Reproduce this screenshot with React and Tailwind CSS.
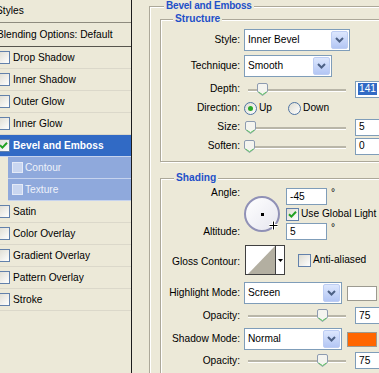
import React from "react";

// Effects list shown in the left column of the dialog
const effects = [
  { label: "Drop Shadow" },
  { label: "Inner Shadow" },
  { label: "Outer Glow" },
  { label: "Inner Glow" },
  { label: "Bevel and Emboss", checked: true, selected: true },
  { label: "Contour", sub: true },
  { label: "Texture", sub: true },
  { label: "Satin" },
  { label: "Color Overlay" },
  { label: "Gradient Overlay" },
  { label: "Pattern Overlay" },
  { label: "Stroke" },
];

// XP style check box
const CheckBox = ({ checked, className = "" }) => (
  <span
    className={`flex h-[13px] w-[13px] shrink-0 items-center justify-center border border-[#6281ab] bg-linear-to-br from-[#dedcd2] to-white ${className}`}
  >
    {checked && (
      <svg width="9" height="9" viewBox="0 0 9 9">
        <path d="M1 4.2 L3.4 6.6 L8 1.8" stroke="#21a121" strokeWidth="2" fill="none" />
      </svg>
    )}
  </span>
);

// XP style radio button
const Radio = ({ checked }) => (
  <span className="flex h-[13px] w-[13px] shrink-0 items-center justify-center rounded-full border border-[#4f74a3] bg-linear-to-br from-[#dedcd2] to-white">
    {checked && <span className="h-[5px] w-[5px] rounded-full bg-[#2aa82a]" />}
  </span>
);

// Right aligned label column
const Label = ({ children, className = "" }) => (
  <span className={`w-[79px] shrink-0 text-right ${className}`}>{children}</span>
);

// Combo box with the blue XP drop button
const Select = ({ children, className = "" }) => (
  <div className={`flex h-[22px] shrink-0 items-center border border-[#7f9db9] bg-white ${className}`}>
    <span className="flex-1 pl-[3px]">{children}</span>
    <span className="mr-[1px] flex h-[18px] w-[17px] items-center justify-center rounded-[2px] border border-[#bdcdf3] bg-linear-to-b from-[#dde7fd] to-[#b3c6f4]">
      <svg width="9" height="6" viewBox="0 0 9 6">
        <path d="M1 1 L4.5 4.5 L8 1" stroke="#4d6185" strokeWidth="2" fill="none" />
      </svg>
    </span>
  </div>
);

// Small text field
const Field = ({ children, selected, className = "", w = "w-[34px]" }) => (
  <div className={`flex h-[17px] shrink-0 items-center border border-[#7f9db9] bg-white pl-[2px] ${w} ${className}`}>
    <span className={selected ? "bg-[#316ac5] px-[1px] text-white" : "px-[1px]"}>{children}</span>
  </div>
);

// Track bar with its thumb, pos is the thumb offset in px
const Slider = ({ pos }) => (
  <div className="relative ml-[4px] h-[13px] w-[102px] shrink-0">
    <div className="absolute left-[4px] right-0 top-[6px] h-[2px] bg-[#b9b6a8] shadow-[0_1px_0_#fff]" />
    <svg className="absolute top-0" style={{ left: pos }} width="11" height="13" viewBox="0 0 11 13">
      <path
        d="M0.5 2 Q0.5 0.5 2 0.5 H9 Q10.5 0.5 10.5 2 V8.5 L5.5 12.5 L0.5 8.5 Z"
        fill="#f4f4ef"
        stroke="#8d9bb0"
      />
      <path d="M1.5 9 L5.5 11.6 L9.5 9" stroke="#5cc45c" fill="none" />
    </svg>
  </div>
);

const Degree = () => <span className="ml-[4px] self-start leading-[10px]">°</span>;

const groupBox =
  "border border-[#aca899] shadow-[inset_1px_1px_0_#fff,1px_1px_0_#fff]";

export default function App() {
  return (
    <div className="flex h-[373px] w-[379px] overflow-hidden bg-[#ece9d8] font-['Liberation_Sans',Arial,sans-serif] text-[10.2px] leading-[12px] text-black">
      {/* Styles list */}
      <div className="flex w-[132px] shrink-0 flex-col border-r border-[#1d1d1d]">
        <div className="flex h-[23px] items-center border-b border-[#8e8b7e]">
          <span className="ml-[-4px]">Styles</span>
        </div>
        <div className="flex h-[24px] items-center border-b border-[#57554d]">
          <span className="ml-[-3px]">Blending Options: Default</span>
        </div>
        {effects.map((fx) =>
          fx.sub ? (
            <div key={fx.label} className="flex h-[22px] pl-[8px]">
              <div className="flex flex-1 items-center border-b border-[#c6d3ee] bg-[#8fa9dc] text-[#eef2fa]">
                <span className="ml-[4px] h-[11px] w-[11px] border border-[#e4eaf7] bg-[#c9d6f0]" />
                <span className="ml-[2px]">{fx.label}</span>
              </div>
            </div>
          ) : (
            <div
              key={fx.label}
              className={`flex h-[22px] items-center border-b ${
                fx.selected
                  ? "border-[#c6d3ee] bg-[#316ac5] font-bold text-white"
                  : "border-[#dbd8ca]"
              }`}
            >
              <CheckBox checked={fx.checked} className="ml-[-3px]" />
              <span className="ml-[3px]">{fx.label}</span>
            </div>
          )
        )}
      </div>

      {/* Bevel and Emboss settings */}
      <div className="min-w-0 flex-1">
        <fieldset className={`ml-[17px] w-[260px] pb-[20px] ${groupBox}`}>
          <legend className="ml-[14px] bg-[#ece9d8] px-[2px] text-[10px] font-bold leading-[12px] tracking-[-0.2px] text-[#1e50c8]">
            Bevel and Emboss
          </legend>

          {/* Structure */}
          <fieldset className={`ml-[10px] mt-[1px] w-[240px] pb-[6px] pt-[4px] ${groupBox}`}>
            <legend className="ml-[12px] bg-[#ece9d8] px-[2px] font-bold leading-[12px] text-[#1e50c8]">
              Structure
            </legend>
            <div className="flex h-[22px] items-center">
              <Label>Style:</Label>
              <Select className="ml-[4px] w-[106px]">Inner Bevel</Select>
            </div>
            <div className="mt-[4px] flex h-[22px] items-center">
              <Label>Technique:</Label>
              <Select className="ml-[4px] w-[88px]">Smooth</Select>
            </div>
            <div className="mt-[3px] flex h-[18px] items-center">
              <Label>Depth:</Label>
              <Slider pos={13} />
              <Field className="ml-[9px]" selected>
                141
              </Field>
            </div>
            <div className="mt-[1px] flex h-[18px] items-center">
              <Label>Direction:</Label>
              <div className="ml-[4px] flex items-center">
                <Radio checked />
                <span className="ml-[2px]">Up</span>
              </div>
              <div className="ml-[16px] flex items-center">
                <Radio />
                <span className="ml-[2px]">Down</span>
              </div>
            </div>
            <div className="mt-[1px] flex h-[18px] items-center">
              <Label>Size:</Label>
              <Slider pos={1} />
              <Field className="ml-[9px]">5</Field>
            </div>
            <div className="mt-[1px] flex h-[18px] items-center">
              <Label>Soften:</Label>
              <Slider pos={0} />
              <Field className="ml-[9px]">0</Field>
            </div>
          </fieldset>

          {/* Shading */}
          <fieldset className={`ml-[10px] mt-[10px] w-[240px] pb-[10px] pt-[4px] ${groupBox}`}>
            <legend className="ml-[13px] bg-[#ece9d8] px-[2px] font-bold leading-[12px] text-[#1e50c8]">
              Shading
            </legend>
            <div className="flex">
              <div className="flex w-[79px] shrink-0 flex-col items-end">
                <span className="mt-[-1px]">Angle:</span>
                <span className="mt-auto flex h-[17px] items-center">Altitude:</span>
              </div>
              <div className="relative ml-[4px] h-[36px] w-[36px] shrink-0 self-center rounded-full border-2 border-[#9091b6] bg-linear-to-br from-white to-[#e6e6ef]">
                <span className="absolute left-[15px] top-[15px] h-[3px] w-[3px] bg-black" />
                <svg className="absolute left-[23px] top-[23px]" width="9" height="9" viewBox="0 0 9 9">
                  <path d="M4.5 0 V9 M0 4.5 H9" stroke="#fff" strokeWidth="3" />
                  <path d="M4.5 0.5 V8.5 M0.5 4.5 H8.5" stroke="#000" strokeWidth="1" />
                </svg>
              </div>
              <div className="ml-[6px] flex flex-col">
                <div className="flex h-[17px]">
                  <Field w="w-[41px]">-45</Field>
                  <Degree />
                </div>
                <div className="flex h-[18px] items-center">
                  <CheckBox checked />
                  <span className="ml-[2px]">Use Global Light</span>
                </div>
                <div className="flex h-[17px]">
                  <Field w="w-[41px]">5</Field>
                  <Degree />
                </div>
              </div>
            </div>

            <div className="mt-[5px] flex items-center">
              <Label className="pt-[3px]">Gloss Contour:</Label>
              <div className="ml-[5px] flex h-[30px] shrink-0 border border-[#404040] bg-white">
                <svg className="block" width="29" height="28" viewBox="0 0 29 28">
                  <polygon points="2,28 29,0 29,28" fill="#b3afa1" />
                </svg>
                <div className="flex w-[9px] items-center justify-center border-l border-[#404040]">
                  <svg width="5" height="3" viewBox="0 0 5 3">
                    <polygon points="0,0 5,0 2.5,3" fill="#000" />
                  </svg>
                </div>
              </div>
              <CheckBox className="ml-[13px]" />
              <span className="ml-[2px]">Anti-aliased</span>
            </div>

            <div className="mt-[7px] flex h-[22px] items-center">
              <Label>Highlight Mode:</Label>
              <Select className="ml-[4px] w-[98px]">Screen</Select>
              <span className="ml-[5px] h-[15px] w-[30px] shrink-0 border border-[#9c9a90] bg-white" />
            </div>
            <div className="mt-[3px] flex h-[17px] items-center">
              <Label>Opacity:</Label>
              <Slider pos={73} />
              <Field className="ml-[9px]">75</Field>
            </div>
            <div className="mt-[4px] flex h-[22px] items-center">
              <Label>Shadow Mode:</Label>
              <Select className="ml-[4px] w-[98px]">Normal</Select>
              <span className="ml-[5px] h-[15px] w-[30px] shrink-0 border border-[#9c9a90] bg-[#ff6600]" />
            </div>
            <div className="mt-[2px] flex h-[17px] items-center">
              <Label>Opacity:</Label>
              <Slider pos={73} />
              <Field className="ml-[9px]">75</Field>
            </div>
          </fieldset>
        </fieldset>
      </div>
    </div>
  );
}
